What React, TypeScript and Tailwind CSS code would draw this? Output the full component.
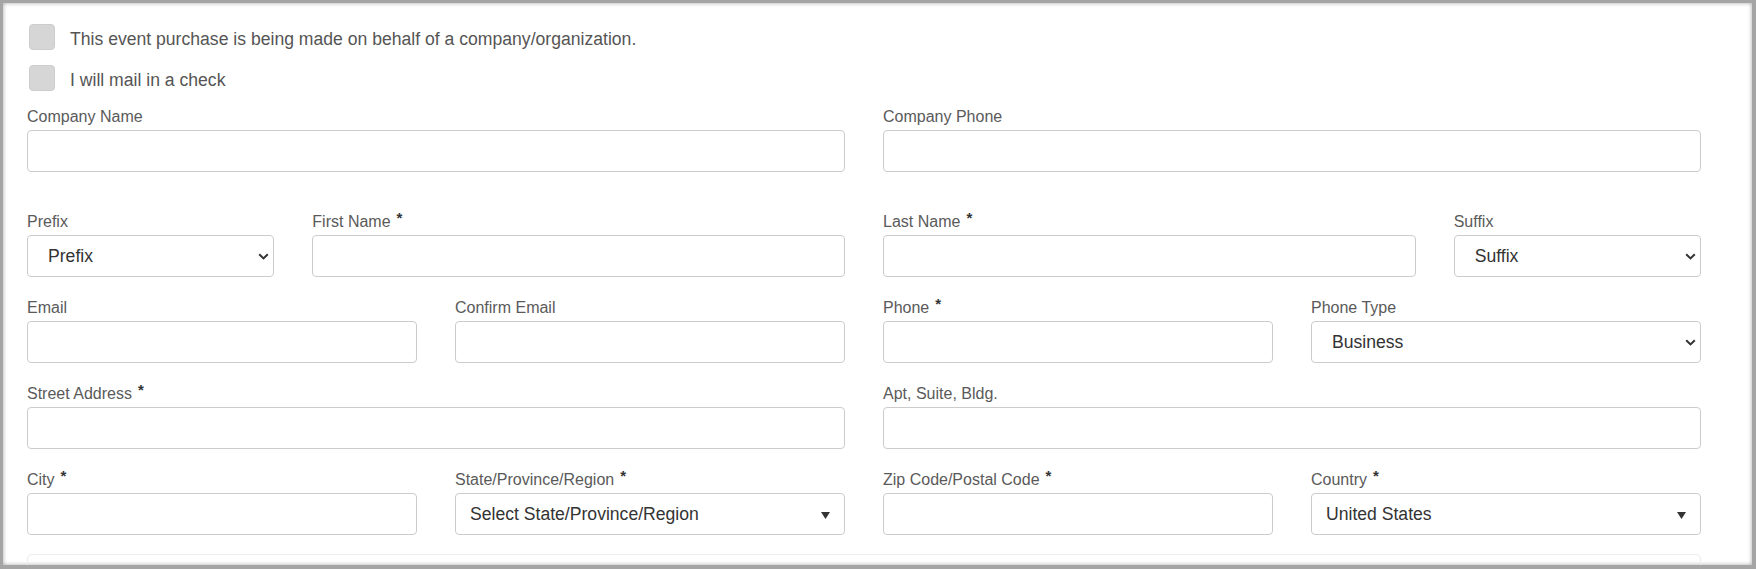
import React from "react";

const font = { fontFamily: '"Liberation Sans", Arial, sans-serif' };

function Label({ text, req }: { text: string; req?: boolean }) {
  return (
    <div className="h-[24px] leading-[24px] text-[16px] text-[#5a5a5a] mb-[1px] whitespace-nowrap">
      {text}
      {req && (
        <span className="relative top-[-4px] ml-[6px] text-[15px] font-bold text-[#333]">*</span>
      )}
    </div>
  );
}

function Input() {
  return <div className="h-[42px] rounded-[4px] border border-[#ccc] bg-white" />;
}

function Chevron() {
  return (
    <svg width="11" height="7" viewBox="0 0 11 7" className="shrink-0">
      <path d="M1.2 1.2 L5.5 5.4 L9.8 1.2" fill="none" stroke="#333" strokeWidth="2" />
    </svg>
  );
}

function NativeSelect({ value }: { value: string }) {
  return (
    <div className="h-[42px] rounded-[4px] border border-[#ccc] bg-white flex items-center pl-[20px] pr-[4px] justify-between">
      <span className="text-[17.6px] text-[#333]">{value}</span>
      <Chevron />
    </div>
  );
}

function Select2({ value }: { value: string }) {
  return (
    <div className="h-[42px] rounded-[4px] border border-[#ccc] bg-white flex items-center pl-[14px] pr-[14px] justify-between">
      <span className="text-[17.6px] text-[#333]">{value}</span>
      <svg width="9" height="7" viewBox="0 0 9 7" className="mt-[3px]">
        <path d="M0 0 H9 L4.5 7 Z" fill="#333" />
      </svg>
    </div>
  );
}

function Field({ label, req, children }: { label: string; req?: boolean; children: React.ReactNode }) {
  return (
    <div>
      <Label text={label} req={req} />
      {children}
    </div>
  );
}

function Check({ text }: { text: string }) {
  return (
    <div className="flex items-center h-[26px]">
      <div className="ml-[2px] w-[26px] h-[26px] rounded-[4px] bg-[#d6d6d6] border border-[#cdcdcd]" />
      <span className="ml-[15px] text-[17.6px] text-[#555] leading-[26px] relative top-[2px]">{text}</span>
    </div>
  );
}

export default function App() {
  return (
    <div
      style={font}
      className="w-[1756px] h-[569px] overflow-hidden bg-white border-t-[3px] border-l-[3px] border-r-[4px] border-b-[4px] border-[#a5a5a5] shadow-[inset_0_0_4px_rgba(0,0,0,0.35)]"
    >
      <div className="pl-[24px] pt-[21px] w-[1698px]">
        <div className="mb-[15px]">
          <Check text="This event purchase is being made on behalf of a company/organization." />
        </div>
        <Check text="I will mail in a check" />

        <div className="mt-[14px] grid grid-cols-2 gap-x-[38px] mb-[38px]">
          <Field label="Company Name">
            <Input />
          </Field>
          <Field label="Company Phone">
            <Input />
          </Field>
        </div>

        <div className="grid grid-cols-2 gap-x-[38px] mb-[19px]">
          <div className="grid grid-cols-3 gap-x-[38px]">
            <Field label="Prefix">
              <NativeSelect value="Prefix" />
            </Field>
            <div className="col-span-2">
              <Field label="First Name" req>
                <Input />
              </Field>
            </div>
          </div>
          <div className="grid grid-cols-3 gap-x-[38px]">
            <div className="col-span-2">
              <Field label="Last Name" req>
                <Input />
              </Field>
            </div>
            <Field label="Suffix">
              <NativeSelect value="Suffix" />
            </Field>
          </div>
        </div>

        <div className="grid grid-cols-4 gap-x-[38px] mb-[19px]">
          <Field label="Email">
            <Input />
          </Field>
          <Field label="Confirm Email">
            <Input />
          </Field>
          <Field label="Phone" req>
            <Input />
          </Field>
          <Field label="Phone Type">
            <NativeSelect value="Business" />
          </Field>
        </div>

        <div className="grid grid-cols-2 gap-x-[38px] mb-[19px]">
          <Field label="Street Address" req>
            <Input />
          </Field>
          <Field label="Apt, Suite, Bldg.">
            <Input />
          </Field>
        </div>

        <div className="grid grid-cols-4 gap-x-[38px] mb-[19px]">
          <Field label="City" req>
            <Input />
          </Field>
          <Field label="State/Province/Region" req>
            <Select2 value="Select State/Province/Region" />
          </Field>
          <Field label="Zip Code/Postal Code" req>
            <Input />
          </Field>
          <Field label="Country" req>
            <Select2 value="United States" />
          </Field>
        </div>

        <div className="h-[60px] rounded-[5px] border border-[#ececec]" />
      </div>
    </div>
  );
}
